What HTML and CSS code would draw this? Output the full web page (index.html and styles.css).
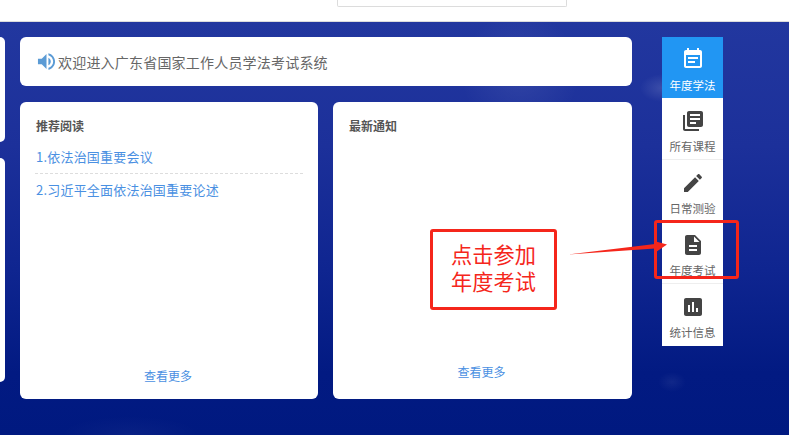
FILE: index.html
```html
<!DOCTYPE html>
<html lang="zh-CN">
<head>
<meta charset="utf-8">
<title>广东省国家工作人员学法考试系统</title>
<link rel="stylesheet" href="styles.css">
</head>
<body>
<header class="topbar"><div class="search-box"></div></header>
<main class="main">
  <div class="left-col">
    <div class="stub stub-a"></div>
    <div class="stub stub-b"></div>
  </div>
  <div class="center">
    <div class="notice">
      <svg class="speaker" viewBox="2 2 20 20"><path d="M3 9v6h4l5 5V4L7 9H3zm13.5 3c0-1.77-1.02-3.29-2.5-4.03v8.05c1.48-.73 2.5-2.25 2.5-4.02zM14 3.23v2.06c2.89.86 5 3.54 5 6.71s-2.11 5.85-5 6.71v2.06c4.01-.91 7-4.49 7-8.77 0-4.28-2.99-7.86-7-8.77z"/></svg>
      <span>欢迎进入广东省国家工作人员学法考试系统</span>
    </div>
    <div class="cards">
      <section class="card card-left">
        <h2 class="card-title">推荐阅读</h2>
        <a class="link-row link-first">1.依法治国重要会议</a>
        <a class="link-row">2.习近平全面依法治国重要论述</a>
        <a class="more more-left">查看更多</a>
      </section>
      <section class="card card-right">
        <h2 class="card-title">最新通知</h2>
        <a class="more more-right">查看更多</a>
      </section>
    </div>
  </div>
  <nav class="side">
    <a class="side-item active">
      <svg viewBox="0 0 24 24"><path d="M17 10H7v2h10v-2zm2-7h-1V1h-2v2H8V1H6v2H5c-1.11 0-1.99.9-1.99 2L3 19c0 1.1.89 2 2 2h14c1.1 0 2-.9 2-2V5c0-1.1-.9-2-2-2zm0 16H5V8h14v11zm-5-5H7v2h7v-2z"/></svg>
      <span>年度学法</span>
    </a>
    <a class="side-item">
      <svg viewBox="0 0 24 24"><path d="M4 6H2v14c0 1.1.9 2 2 2h14v-2H4V6zm16-4H8c-1.1 0-2 .9-2 2v12c0 1.1.9 2 2 2h12c1.1 0 2-.9 2-2V4c0-1.1-.9-2-2-2zm-1 9H9V9h10v2zm-4 4H9v-2h6v2zm4-8H9V5h10v2z"/></svg>
      <span>所有课程</span>
    </a>
    <a class="side-item">
      <svg viewBox="0 0 24 24"><path d="M3 17.25V21h3.75L17.81 9.94l-3.75-3.75L3 17.25zM20.71 7.04c.39-.39.39-1.02 0-1.41l-2.34-2.34c-.39-.39-1.02-.39-1.41 0l-1.83 1.83 3.75 3.75 1.83-1.83z"/></svg>
      <span>日常测验</span>
    </a>
    <a class="side-item">
      <svg viewBox="0 0 24 24"><path d="M14 2H6c-1.1 0-1.99.9-1.99 2L4 20c0 1.1.89 2 1.99 2H18c1.1 0 2-.9 2-2V8l-6-6zm2 16H8v-2h8v2zm0-4H8v-2h8v2zm-3-5V3.5L18.5 9H13z"/></svg>
      <span>年度考试</span>
    </a>
    <a class="side-item">
      <svg viewBox="0 0 24 24"><path d="M19 3H5c-1.1 0-2 .9-2 2v14c0 1.1.9 2 2 2h14c1.1 0 2-.9 2-2V5c0-1.1-.9-2-2-2zM9 17H7v-7h2v7zm4 0h-2V7h2v10zm4 0h-2v-4h2v4z"/></svg>
      <span>统计信息</span>
    </a>
  </nav>
</main>
<div class="callout"><div class="callout-line">点击参加</div><div class="callout-line">年度考试</div></div>
<svg class="arrow" viewBox="0 0 100 30"><polygon points="0,15.5 87,5 86,2 99,5.5 88,13 87,9.5"/></svg>
<div class="highlight"></div>
</body>
</html>
```
FILE: styles.css
```css
* { box-sizing: border-box; }
html, body { margin: 0; padding: 0; }
body {
  width: 789px;
  height: 435px;
  overflow: hidden;
  position: relative;
  background: #fff;
  font-family: "Noto Sans CJK SC", "Liberation Sans", sans-serif;
  color: #666;
}
.topbar {
  height: 22px;
  background: #fff;
  border-bottom: 1px solid #dcdcdc;
  display: flex;
  padding-left: 337px;
}
.search-box {
  width: 230px;
  height: 7px;
  background: #fff;
  border: 1px solid #dcdcdc;
  border-top: 0;
  border-radius: 0 0 2px 2px;
}
.main {
  height: 413px;
  padding-top: 15px;
  display: flex;
  align-items: flex-start;
  background:
    radial-gradient(ellipse 22px 14px at 662px 66px, rgba(255,255,255,.13), transparent),
    radial-gradient(ellipse 60px 60px at 520px 50px, rgba(255,255,255,.08), transparent),
    radial-gradient(ellipse 14px 10px at 672px 360px, rgba(255,255,255,.06), transparent),
    radial-gradient(ellipse 70px 18px at 130px 412px, rgba(255,255,255,.03), transparent),
    linear-gradient(180deg, #22379f 0%, #1c309a 30%, #0f2590 60%, #021a82 85%, #001980 100%);
}
.left-col {
  width: 5px;
  margin-right: 15px;
  display: flex;
  flex-direction: column;
  gap: 16px;
}
.stub { background: #fff; border-radius: 0 5px 5px 0; }
.stub-a { height: 105px; }
.stub-b { height: 224px; }
.center { width: 612px; margin-right: 30px; }
.notice {
  height: 49px;
  background: #fff;
  border-radius: 6px;
  display: flex;
  align-items: center;
  gap: 2px;
  padding-left: 17px;
  font-size: 14px;
  letter-spacing: .2px;
  color: #666;
}
.speaker { width: 19px; height: 19px; fill: #5b9bd5; flex: none; }
.cards { display: flex; gap: 15px; margin-top: 16px; }
.card {
  height: 297px;
  background: #fff;
  border-radius: 6px;
  padding: 15px 15px 0;
  display: flex;
  flex-direction: column;
}
.card-left { width: 298px; }
.card-right { width: 299px; }
.card-title {
  margin: 0;
  padding-left: 1px;
  font-size: 12px;
  line-height: 18px;
  font-weight: 700;
  color: #555;
}
.link-row {
  display: block;
  height: 33px;
  line-height: 32px;
  padding-left: 1px;
  font-size: 13px;
  letter-spacing: .2px;
  color: #4a90e2;
}
.link-first { margin-top: 6px; border-bottom: 1px dashed #ddd; }
.more {
  display: block;
  margin-top: auto;
  padding-right: 2px;
  text-align: center;
  font-size: 12px;
  line-height: 18px;
  color: #4a90e2;
}
.more-left { margin-bottom: 14px; }
.more-right { margin-bottom: 18px; }
.side { width: 61px; background: #fff; display: flex; flex-direction: column; }
.side-item {
  height: 62px;
  padding-top: 11px;
  display: flex;
  flex-direction: column;
  align-items: center;
  font-size: 11.5px;
  line-height: 16px;
  color: #666;
  border-bottom: 1px solid #eee;
}
.side-item:last-child { border-bottom: 0; }
.side-item svg { width: 24px; height: 24px; fill: #444; margin-bottom: 5px; flex: none; }
.side-item.active { height: 61px; padding-top: 10px; background: #2196f3; color: #fff; border-bottom: 0; }
.side-item.active svg { fill: #fff; margin-bottom: 6px; }
.callout {
  position: absolute;
  left: 430px;
  top: 229px;
  width: 127px;
  height: 81px;
  padding-bottom: 2px;
  background: #fff;
  border: 3px solid #f5261b;
  border-radius: 3px;
  display: flex;
  flex-direction: column;
  align-items: center;
  justify-content: center;
  font-family: "Liberation Sans", "Noto Sans CJK SC", sans-serif;
  font-size: 21.2px;
  color: #f5261b;
}
.callout-line { height: 27px; line-height: 27px; }
.arrow { position: absolute; left: 568px; top: 239px; width: 100px; height: 30px; fill: #f5261b; }
.highlight {
  position: absolute;
  left: 654px;
  top: 220px;
  width: 85px;
  height: 59px;
  border: 3px solid #f5261b;
  border-radius: 3px;
}
```
